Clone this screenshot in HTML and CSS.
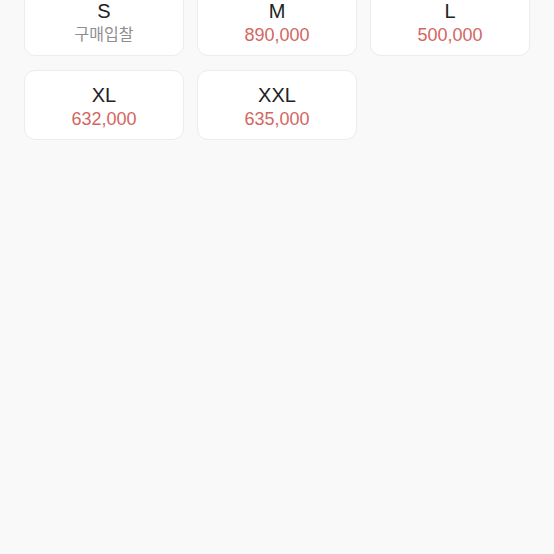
FILE: index.html
```html
<!DOCTYPE html>
<html lang="ko">
<head>
    <meta charset="UTF-8">
    <meta name="viewport" content="width=device-width, initial-scale=1.0">
    <title>사이즈 선택</title>
    <link rel="stylesheet" href="styles.css">
</head>
<body>
    <div class="size-grid">
        <div class="size-card">
            <p class="size-name">S</p>
            <p class="size-price empty">구매입찰</p>
        </div>
        <div class="size-card">
            <p class="size-name">M</p>
            <p class="size-price">890,000</p>
        </div>
        <div class="size-card">
            <p class="size-name">L</p>
            <p class="size-price">500,000</p>
        </div>
        <div class="size-card">
            <p class="size-name">XL</p>
            <p class="size-price">632,000</p>
        </div>
        <div class="size-card">
            <p class="size-name">XXL</p>
            <p class="size-price">635,000</p>
        </div>
    </div>
</body>
</html>
```
FILE: styles.css
```css
* {
    margin: 0;
    padding: 0;
    box-sizing: border-box;
}

body {
    background-color: #f9f9f9;
    font-family: "Liberation Sans", "Noto Sans CJK KR", sans-serif;
    height: 554px;
    overflow: hidden;
}

/* Size grid */
.size-grid {
    display: grid;
    grid-template-columns: repeat(3, 160px);
    gap: 14px 13px;
    padding: 0 24px;
    margin-top: -14px;
}

.size-card {
    height: 70px;
    background-color: #fff;
    border: 1px solid #ececec;
    border-radius: 11px;
    display: flex;
    flex-direction: column;
    align-items: center;
    justify-content: center;
    padding-top: 4px;
}

.size-name {
    font-size: 20px;
    line-height: 24px;
    color: #222;
}

.size-price {
    font-size: 18px;
    line-height: 24px;
    color: #d4665f;
}

.size-price.empty {
    color: #8e8e8e;
    font-size: 16px;
}
```
